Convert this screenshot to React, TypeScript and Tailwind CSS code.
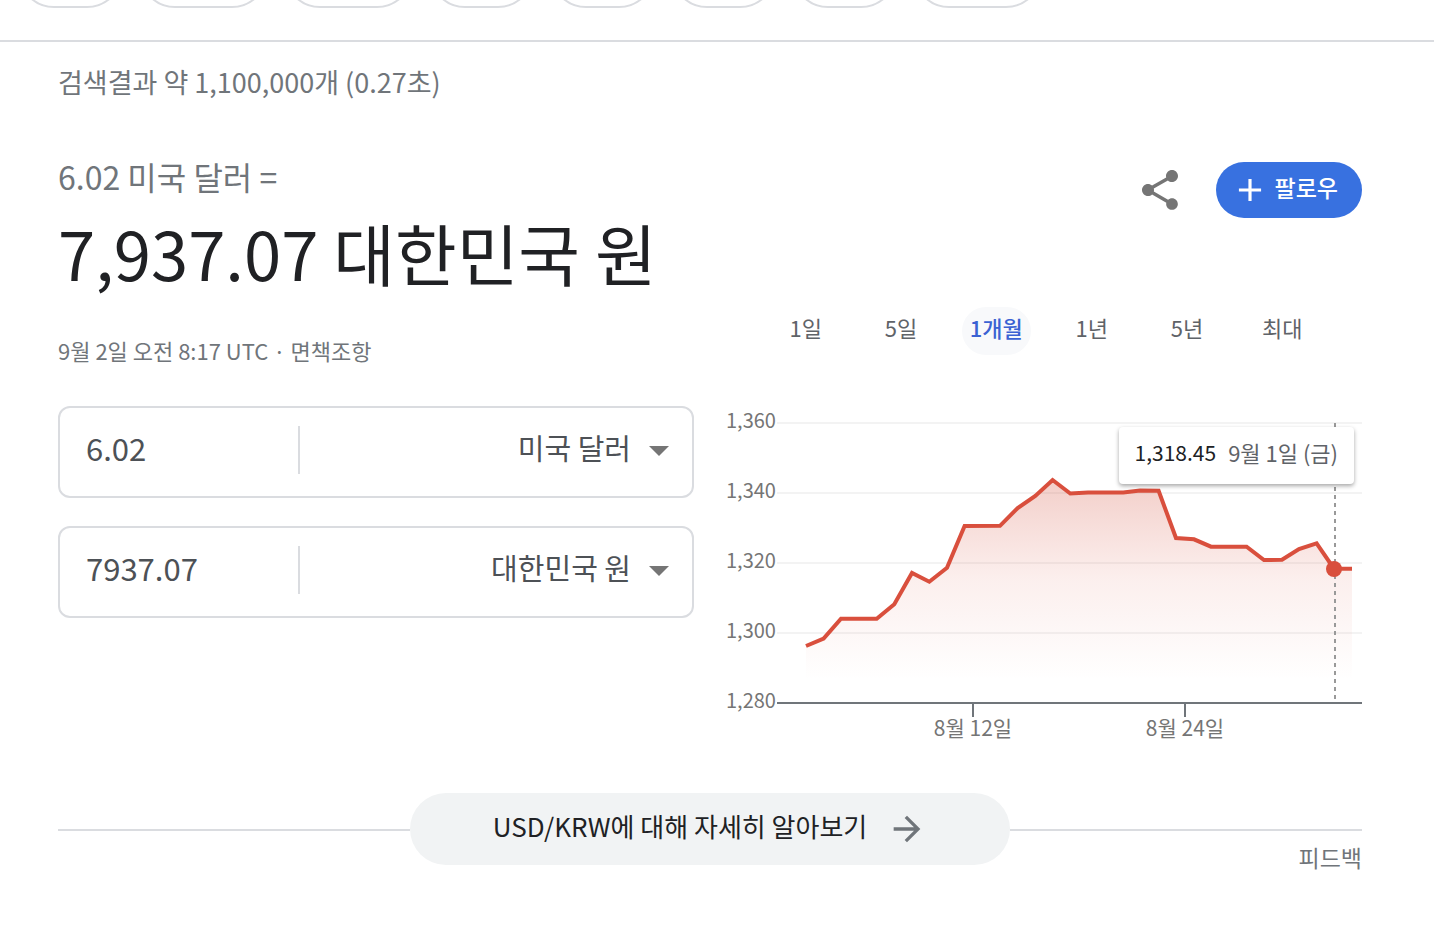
import { useState } from "react";
import { MdAdd, MdArrowDropDown, MdArrowForward, MdShare } from "react-icons/md";

const filters = [
    { name: "전체", width: "w-[105px]" },
    { name: "이미지", width: "w-[129px]" },
    { name: "동영상", width: "w-[129px]" },
    { name: "뉴스", width: "w-[105px]" },
    { name: "지도", width: "w-[105px]" },
    { name: "도서", width: "w-[105px]" },
    { name: "쇼핑", width: "w-[105px]" },
    { name: "항공편", width: "w-[129px]" },
];

const ranges = ["1일", "5일", "1개월", "1년", "5년", "최대"];
const currencies = ["미국 달러", "대한민국 원"];

const gridLines = [
    { label: "1,360", y: 23 },
    { label: "1,340", y: 93 },
    { label: "1,320", y: 163 },
    { label: "1,300", y: 233 },
    { label: "1,280", y: 303 },
];

const ticks = [
    { label: "8월 12일", x: 247 },
    { label: "8월 24일", x: 459 },
];

const points = [
    [80, 246], [97.6, 238.5], [115, 218.7], [150.7, 218.7], [168.3, 204.3], [186, 173],
    [203.3, 181.7], [221, 167.7], [238.6, 126], [274, 125.8], [291.7, 108], [309.3, 96],
    [326.6, 80], [344.3, 93.5], [362, 92.4], [397.3, 92.4], [414, 90.5], [432.6, 90.8],
    [450, 138], [468, 139.3], [485, 146.7], [520.6, 146.7], [538, 160], [556, 159.8],
    [573, 149], [590.6, 143.3], [608, 168.7], [626, 168.7],
];

function CurrencyRow({ label, value, currency }: { label: string; value: string; currency: string }) {
    const [amount, setAmount] = useState(value);
    const [selected, setSelected] = useState(currency);

    return (
        <div className="flex h-[92px] items-center rounded-xl border-2 border-[#dadce0] pb-1 pr-[9px] text-[#4d5156]">
            <input
                type="text"
                aria-label={`${label} 금액`}
                value={amount}
                onChange={(e) => setAmount(e.target.value)}
                className="h-12 w-[240px] border-r-2 border-[#dadce0] bg-transparent pb-1.5 pl-[26px] text-[31px] leading-10 outline-none"
            />
            <select
                aria-label={`${label} 통화`}
                value={selected}
                onChange={(e) => setSelected(e.target.value)}
                className="h-12 min-w-0 flex-1 appearance-none bg-transparent pb-1.5 pr-1 text-right text-[29px] leading-10 outline-none [text-align-last:right]"
            >
                {currencies.map((name) => (
                    <option key={name}>{name}</option>
                ))}
            </select>
            <MdArrowDropDown className="pointer-events-none h-12 w-12 shrink-0 text-[#757575]" />
        </div>
    );
}

function RateChart() {
    const line = points.map(([x, y]) => `${x},${y}`).join(" ");

    return (
        <div className="relative">
            <svg viewBox="0 0 636 352" className="block w-full" role="img" aria-label="USD/KRW 1개월 환율">
                <defs>
                    <linearGradient id="rate-fill" gradientUnits="userSpaceOnUse" x1="0" y1="80" x2="0" y2="280">
                        <stop offset="0" stopColor="#d0442f" stopOpacity="0.26" />
                        <stop offset="0.5" stopColor="#d94f3d" stopOpacity="0.09" />
                        <stop offset="1" stopColor="#d94f3d" stopOpacity="0" />
                    </linearGradient>
                </defs>
                {gridLines.map(({ label, y }) => (
                    <g key={label}>
                        <text x="0" y={y + 5} fontSize="20" fill="#757575">{label}</text>
                        <line x1="51" x2="636" y1={y} y2={y} strokeWidth="2" stroke={y === 303 ? "#70757a" : "#f3f3f3"} />
                    </g>
                ))}
                <polygon points={`80,303 ${line} 626,303`} fill="url(#rate-fill)" />
                <polyline points={line} fill="none" stroke="#d94f3d" strokeWidth="4" />
                {ticks.map(({ label, x }) => (
                    <g key={label}>
                        <line x1={x} x2={x} y1="304" y2="317" stroke="#70757a" strokeWidth="2" />
                        <text x={x} y="336" fontSize="21" fill="#757575" textAnchor="middle">{label}</text>
                    </g>
                ))}
                <line x1="609" x2="609" y1="23" y2="302" stroke="#999" strokeWidth="2" strokeDasharray="4 4" />
                <circle cx="608" cy="169" r="8" fill="#d94f3d" />
            </svg>
            {/* Hovered rate */}
            <div className="absolute right-2 top-[27px] flex h-[57px] items-center gap-3 whitespace-nowrap rounded bg-white px-4 pb-1.5 shadow-[0_2px_4px_rgba(0,0,0,0.35)]">
                <span className="text-[21px] text-[#202124]">1,318.45</span>
                <span className="text-[22px] text-[#5f6368]">9월 1일 (금)</span>
            </div>
        </div>
    );
}

export default function App() {
    const [range, setRange] = useState("1개월");

    return (
        <div className="bg-white font-['Noto_Sans_CJK_KR',sans-serif] text-[#70757a]">
            <nav className="border-b-2 border-[#dadce0] pb-8">
                <div className="flex h-2 items-end gap-4 overflow-hidden pl-[18px]">
                    {filters.map(({ name, width }) => (
                        <button
                            key={name}
                            aria-label={name}
                            className={`h-[72px] shrink-0 rounded-full border-2 border-[#dadce0] ${width}`}
                        />
                    ))}
                </div>
            </nav>

            <main className="pb-14 pl-[58px] pr-[72px] pt-5">
                <p className="text-[27px] leading-10">검색결과 약 1,100,000개 (0.27초)</p>

                <div className="grid grid-cols-2 gap-x-8 pt-[52px]">
                    <section>
                        <h2 className="whitespace-nowrap">
                            <span className="block text-[32px] leading-[44px]">6.02 미국 달러 =</span>
                            <span className="block text-[67px] leading-[108px] text-[#202124]">7,937.07 대한민국 원</span>
                        </h2>
                        <p className="pt-6 text-[22px] leading-10">
                            9월 2일 오전 8:17 UTC · <a href="#disclaimer">면책조항</a>
                        </p>
                        <div className="space-y-7 pt-9">
                            <CurrencyRow label="보내는" value="6.02" currency="미국 달러" />
                            <CurrencyRow label="받는" value="7937.07" currency="대한민국 원" />
                        </div>
                    </section>

                    <section>
                        <div className="flex items-center justify-end gap-8 pt-2">
                            <button aria-label="공유" className="text-[#757575]">
                                <MdShare className="h-12 w-12" />
                            </button>
                            <button className="flex h-14 items-center gap-1.5 rounded-full bg-[#3871e0] pl-[15px] pr-6 text-[23px] font-medium text-white">
                                <MdAdd className="h-[38px] w-[38px]" />
                                <span className="pb-1.5">팔로우</span>
                            </button>
                        </div>
                        <div className="grid grid-cols-6 justify-items-center px-8 pb-[45px] pt-[89px]">
                            {ranges.map((name) => (
                                <button
                                    key={name}
                                    onClick={() => setRange(name)}
                                    className={`h-12 whitespace-nowrap rounded-full px-2 pb-2 text-[22px] ${
                                        name === range ? "bg-[#f8f9fb] font-medium text-[#3b62d3]" : "text-[#5f6368]"
                                    }`}
                                >
                                    {name}
                                </button>
                            ))}
                        </div>
                        <RateChart />
                    </section>
                </div>

                <div className="flex items-start pt-[41px]">
                    <div className="mt-9 h-0.5 flex-1 bg-[#dadce0]" />
                    <a
                        href="#usd-krw"
                        className="flex h-[72px] w-[600px] items-center justify-center gap-5 rounded-full bg-[#f1f3f4] text-[26px] text-[#202124]"
                    >
                        <span className="pb-2">USD/KRW에 대해 자세히 알아보기</span>
                        <MdArrowForward className="h-10 w-10 text-[#70757a]" />
                    </a>
                    <div className="flex-1 pt-9 text-right">
                        <div className="h-0.5 bg-[#dadce0]" />
                        <a href="#feedback" className="inline-block pt-2 text-[23px] leading-9">피드백</a>
                    </div>
                </div>
            </main>
        </div>
    );
}
